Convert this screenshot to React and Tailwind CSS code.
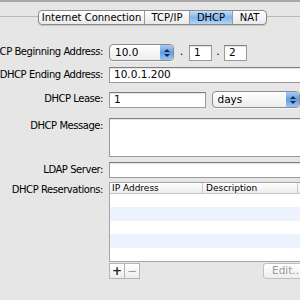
import React from 'react';

const font = { fontFamily: '"DejaVu Sans", "Liberation Sans", sans-serif' };

function Field({ value = '', className = '' }) {
  return (
    <div
      className={`h-[16px] bg-white border border-[#9a9a9a] border-t-[#7f7f7f] shadow-[inset_0_1px_1px_rgba(0,0,0,0.12)] px-[4px] flex items-center text-[10.5px] text-black ${className}`}
    >
      {value}
    </div>
  );
}

function Arrows() {
  return (
    <div className="w-[13px] h-full rounded-r-[4px] bg-gradient-to-b from-[#a9cbf0] via-[#5f9ee6] to-[#9cc4f0] flex flex-col items-center justify-center gap-[2px]">
      <svg width="6" height="3" viewBox="0 0 6 3"><path d="M0 3 L3 0 L6 3 Z" fill="#1a2a44" /></svg>
      <svg width="6" height="3" viewBox="0 0 6 3"><path d="M0 0 L3 3 L6 0 Z" fill="#1a2a44" /></svg>
    </div>
  );
}

function Popup({ value, className = '' }) {
  return (
    <div
      className={`h-[17px] rounded-[4px] border border-[#8c8c8c] bg-gradient-to-b from-white to-[#ececec] flex items-stretch overflow-hidden shadow-[0_1px_0_rgba(255,255,255,0.6)] ${className}`}
    >
      <div className="flex-1 flex items-center pl-[5px] text-[10.5px] text-black">{value}</div>
      <Arrows />
    </div>
  );
}

function Row({ label, children, className = '' }) {
  return (
    <div className={`flex items-start ${className}`}>
      <div className="w-[103px] shrink-0 flex justify-end whitespace-nowrap text-[10px] tracking-[-0.45px] text-black leading-[16px] mr-[6px]">
        {label}
      </div>
      <div className="flex-1 min-w-0">{children}</div>
    </div>
  );
}

export default function App() {
  const tabs = ['Internet Connection', 'TCP/IP', 'DHCP', 'NAT'];
  const widths = ['w-[105px]', 'w-[45px]', 'w-[43px]', 'w-[34px]'];
  return (
    <div className="w-[300px] h-[300px] overflow-hidden bg-[#e6e6e6] relative" style={font}>
      <div className="h-[2px] bg-[#a8a8a8]" />
      <div className="h-[8px]" />
      <div className="relative h-[15px]">
        <div className="absolute left-0 right-0 top-[6px] h-px bg-[#b9b9b9]" />
        <div className="absolute left-[38px] top-0 flex h-[15px] rounded-[4px] border border-[#8a8a8a] overflow-hidden bg-gradient-to-b from-white to-[#e9e9e9] shadow-[0_1px_1px_rgba(0,0,0,0.15)]">
          {tabs.map((t, i) => (
            <div
              key={t}
              className={`${widths[i]} whitespace-nowrap flex items-center justify-center text-[10px] ${i > 0 ? 'border-l border-[#9a9a9a]' : ''} ${t === 'DHCP' ? 'bg-gradient-to-b from-[#c4def8] via-[#7fb5ee] to-[#b5d6f7] text-black' : 'text-black'}`}
            >
              {t}
            </div>
          ))}
        </div>
      </div>

      <div className="pt-[19px] flex flex-col">
        <Row label="DHCP Beginning Address:">
          <div className="flex items-center">
            <Popup value="10.0" className="w-[65px]" />
            <span className="w-[15px] text-center text-[11px]">.</span>
            <Field value="1" className="w-[23px]" />
            <span className="w-[12px] text-center text-[11px]">.</span>
            <Field value="2" className="w-[23px]" />
          </div>
        </Row>
        <Row label="DHCP Ending Address:" className="mt-[6px]">
          <Field value="10.0.1.200" className="w-[200px]" />
        </Row>
        <Row label="DHCP Lease:" className="mt-[8px]">
          <div className="flex items-center">
            <Field value="1" className="w-[98px]" />
            <Popup value="days" className="w-[90px] ml-[6px]" />
          </div>
        </Row>
        <Row label="DHCP Message:" className="mt-[10px]">
          <Field className="w-[200px] h-[39px]" />
        </Row>
        <Row label="LDAP Server:" className="mt-[5px]">
          <Field className="w-[200px]" />
        </Row>
        <Row label="DHCP Reservations:" className="mt-[4px]">
          <div className="w-[200px] border border-[#a5a5a5] bg-white">
            <div className="h-[11px] flex text-[9px] leading-[11px] bg-gradient-to-b from-white to-[#ececec] border-b border-[#c8c8c8]">
              <div className="w-[93px] pl-[2px] border-r border-[#c8c8c8]">IP Address</div>
              <div className="w-[95px] pl-[3px] border-r border-[#c8c8c8]">Description</div>
              <div className="flex-1" />
            </div>
            {[0, 1, 2, 3, 4].map((r) => (
              <div key={r} className={`h-[13.4px] ${r % 2 ? 'bg-[#edf3fe]' : 'bg-white'}`} />
            ))}
          </div>
          <div className="flex items-center mt-[1px]">
            <div className="flex h-[16px] border border-[#b4b4b4] bg-gradient-to-b from-white to-[#ededed]">
              <div className="w-[15px] flex items-center justify-center text-[12px] font-bold text-[#222] border-r border-[#b4b4b4] leading-none">+</div>
              <div className="w-[14px] flex items-center justify-center text-[12px] text-[#9a9a9a] leading-none">−</div>
            </div>
            <div className="ml-auto w-[48px] h-[16px] -mr-[11px] rounded-[3px] border border-[#c0c0c0] bg-gradient-to-b from-white to-[#eeeeee] text-[10.5px] text-[#9a9a9a] flex items-center pl-[8px]">
              Edit...
            </div>
          </div>
        </Row>
      </div>
    </div>
  );
}
